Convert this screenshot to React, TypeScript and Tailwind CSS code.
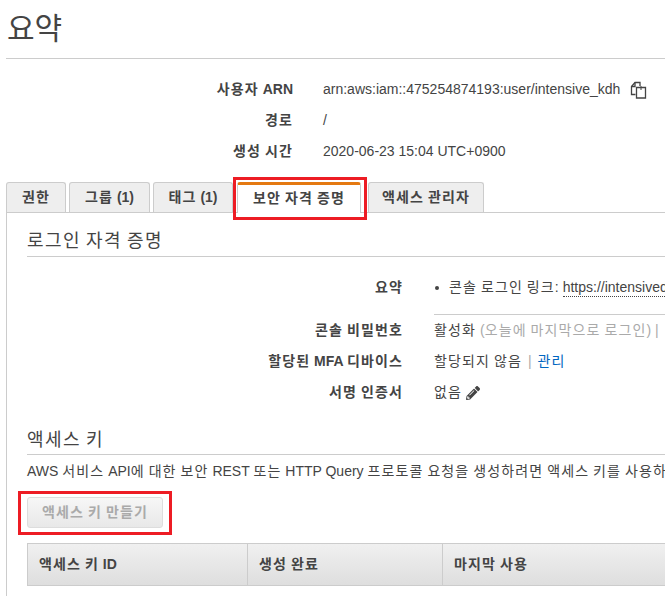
import { FaPencilAlt } from 'react-icons/fa'

const font = "font-['Liberation_Sans','Noto_Sans_CJK_KR',sans-serif]"

// hangul in the reference runs wider than Noto's, latin text does not
function Ko({ children }: { children: string }) {
  return (
    <span>
      {children.split(/([\uac00-\ud7a3]+)/).map((part, i) =>
        i % 2 === 1 ? (
          <span key={i} className="tracking-[0.08em]">
            {part}
          </span>
        ) : (
          part
        )
      )}
    </span>
  )
}

function CopyIcon() {
  return (
    <svg width="17" height="18" viewBox="0 0 17 18" fill="none" stroke="#444" strokeWidth="1.3" className="ml-[10px] shrink-0">
      <path d="M5.5 13.5H1.5V5.5L5 1.5H10V5" />
      <path d="M5 1.5V5.5H1.5" />
      <path d="M6.5 6.5H15.5V17H6.5Z" fill="#fff" />
      <path d="M11 5V9" strokeWidth="1" />
    </svg>
  )
}

function Tab({ label, className, active }: { label: string; className: string; active?: boolean }) {
  if (active) {
    return (
      <div className={`${className} relative z-10 -mb-px h-[31px] rounded-t-[3px] border-x border-[#ccc] border-t-[3px] border-t-[#e47911] bg-white text-center text-[14px] leading-[26px] font-bold text-[#444]`}>
        <Ko>{label}</Ko>
      </div>
    )
  }
  return (
    <div className={`${className} h-[30px] rounded-t-[3px] border-x border-t border-[#ccc] bg-[#eee] text-center text-[14px] leading-[28px] font-bold text-[#444]`}>
      <Ko>{label}</Ko>
    </div>
  )
}

function SummaryRow({ label, children }: { label: string; children: React.ReactNode }) {
  return (
    <div className="flex h-[31px] items-center">
      <div className="w-[287px] shrink-0 text-right text-[14px] font-bold text-[#444]">
        <Ko>{label}</Ko>
      </div>
      <div className="ml-[30px] flex items-center whitespace-nowrap text-[14px] text-[#444]">{children}</div>
    </div>
  )
}

function CredRow({ label, children }: { label: string; children: React.ReactNode }) {
  return (
    <div className="flex h-[31px] items-center">
      <div className="w-[376px] shrink-0 text-right text-[14px] font-bold text-[#444]">
        <Ko>{label}</Ko>
      </div>
      <div className="ml-[31px] flex items-center whitespace-nowrap text-[14px] text-[#444]">{children}</div>
    </div>
  )
}

export default function App() {
  return (
    <div className={`${font} relative h-[596px] w-[665px] overflow-hidden bg-white`}>
      {/* Heading */}
      <div className="ml-[6px] h-[59px] border-b border-[#ccc] pt-[7px] pl-px text-[30px] leading-[44px] text-[#444]">요약</div>

      {/* User details */}
      <div className="mt-[15px] ml-[6px]">
        <SummaryRow label="사용자 ARN">
          arn:aws:iam::475254874193:user/intensive_kdh
          <CopyIcon />
        </SummaryRow>
        <SummaryRow label="경로">/</SummaryRow>
        <SummaryRow label="생성 시간">2020-06-23 15:04 UTC+0900</SummaryRow>
      </div>

      {/* Tabs */}
      <div className="mt-[15px] ml-[6px] flex items-end border-b border-[#ccc]">
        <Tab label="권한" className="w-[60px]" />
        <Tab label="그룹 (1)" className="ml-[3px] w-[81px]" />
        <Tab label="태그 (1)" className="ml-[3px] w-[80px]" />
        <Tab label="보안 자격 증명" className="ml-[4px] w-[124px]" active />
        <Tab label="액세스 관리자" className="ml-[7px] w-[116px]" />
      </div>

      {/* Tab panel */}
      <div className="ml-[6px] h-[400px] border-l border-[#ccc] pl-[20px]">
        <div className="h-[44px] w-[700px] border-b border-[#ccc] pt-[15px] text-[18px] leading-[26px] text-[#444]">
          <Ko>로그인 자격 증명</Ko>
        </div>

        <div className="mt-[15px] flex h-[31px] items-center">
          <div className="w-[376px] shrink-0 text-right text-[14px] font-bold text-[#444]">
            <Ko>요약</Ko>
          </div>
          <div className="ml-[31px] flex items-center whitespace-nowrap text-[14px] text-[#444]">
            <span className="mr-[10px] ml-px h-[4px] w-[4px] rounded-full bg-[#444]" />
            <Ko>콘솔 로그인 링크:</Ko>
            <span className="ml-[4px] border-b border-dotted border-[#444] leading-[17px]">https://intensivedev.signin.aws.amazon.com/console</span>
          </div>
        </div>
        <div className="mt-[11px] ml-[407px] h-px w-[300px] bg-[#ccc]" />

        <CredRow label="콘솔 비밀번호">
          <Ko>활성화</Ko>
          <span className="ml-[4px] text-[#aaa]">
            <Ko>(오늘에 마지막으로 로그인) |</Ko>
          </span>
        </CredRow>
        <CredRow label="할당된 MFA 디바이스">
          <Ko>할당되지 않음</Ko>
          <span className="mx-[6px] text-[#aaa]">|</span>
          <span className="text-[#0066c0]">
            <Ko>관리</Ko>
          </span>
        </CredRow>
        <CredRow label="서명 인증서">
          <Ko>없음</Ko>
          <FaPencilAlt size={14} color="#444" className="ml-[4px]" />
        </CredRow>

        <div className="mt-[6px] h-[41px] w-[700px] border-b border-[#ccc] pt-[13px] text-[18px] leading-[26px] text-[#444]">
          <Ko>액세스 키</Ko>
        </div>
        <div className="mt-[6px] whitespace-nowrap text-[14px] leading-[20px] text-[#444]">
          <Ko>AWS 서비스 API에 대한 보안 REST 또는 HTTP Query 프로토콜 요청을 생성하려면 액세스 키를 사용하세요.</Ko>
        </div>

        <div className="mt-[16px] h-[31px] w-[136px] rounded-[3px] border border-[#ddd] bg-[linear-gradient(#f7f7f7,#e8e8e8)] text-center text-[14px] leading-[29px] font-bold text-[#aaa]">
          <Ko>액세스 키 만들기</Ko>
        </div>

        <div className="mt-[15px] flex h-[43px] w-[800px] border border-[#ccc] bg-[linear-gradient(#f0f0f0,#dedede)] text-[14px] leading-[41px] font-bold text-[#444]">
          <div className="w-[220px] border-r border-[#ccc] pl-[11px]">
            <Ko>액세스 키 ID</Ko>
          </div>
          <div className="w-[195px] border-r border-[#ccc] pl-[11px]">
            <Ko>생성 완료</Ko>
          </div>
          <div className="flex-1 pl-[11px]">
            <Ko>마지막 사용</Ko>
          </div>
        </div>
      </div>

      {/* Red annotation boxes */}
      <div className="absolute top-[177px] left-[233px] h-[43px] w-[134px] border-[3px] border-[#ed1c24]" />
      <div className="absolute top-[491px] left-[18px] h-[44px] w-[154px] border-[3px] border-[#ed1c24]" />
    </div>
  )
}
